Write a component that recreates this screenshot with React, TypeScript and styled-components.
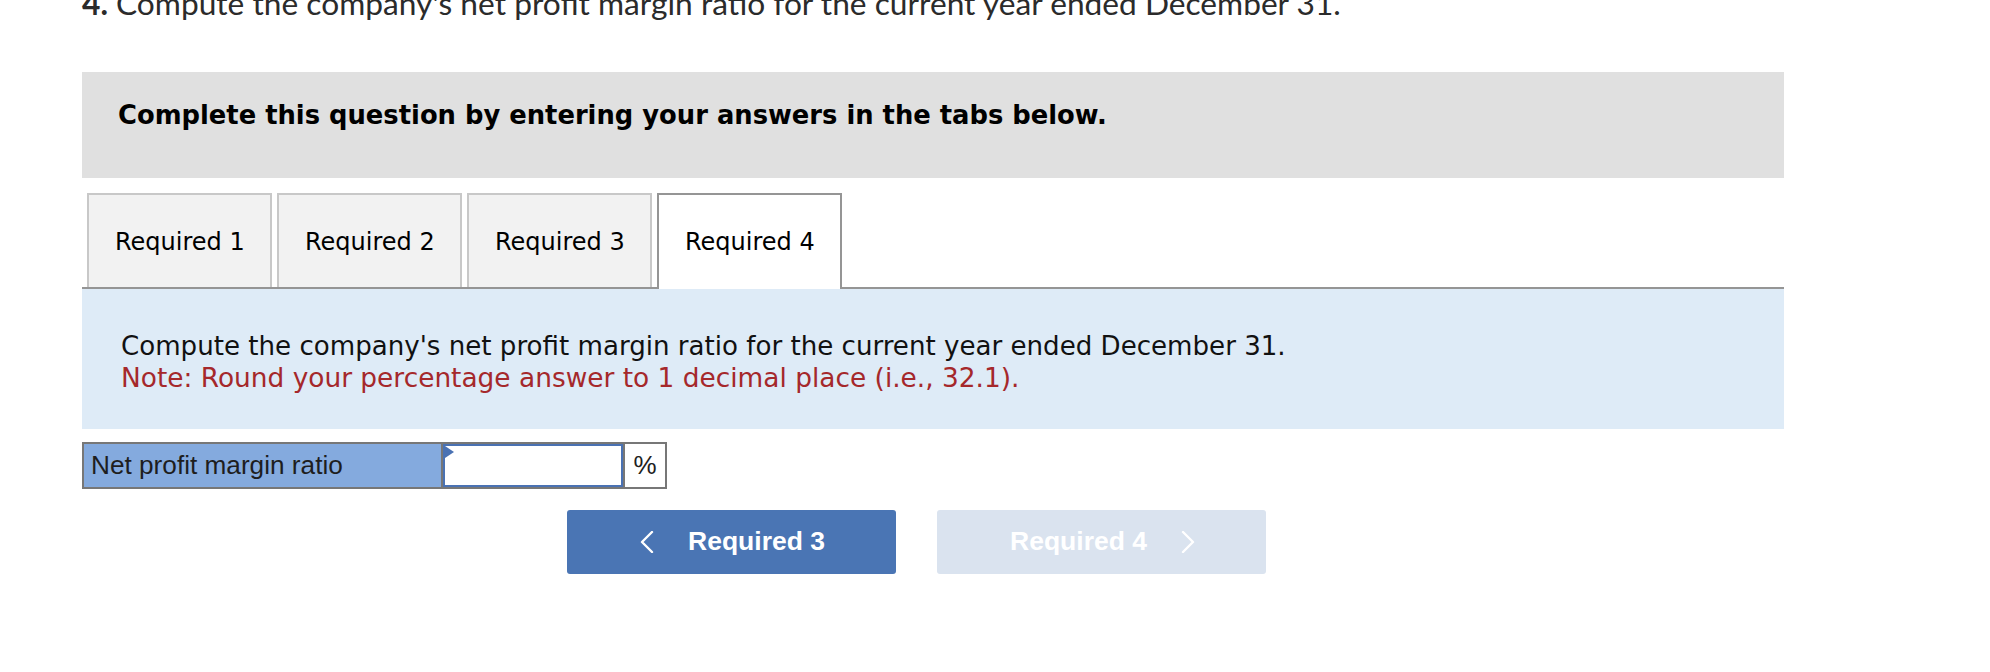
import React from "react";
import styled, { createGlobalStyle } from "styled-components";

const Global = createGlobalStyle`
  html, body { margin: 0; padding: 0; background: #ffffff; }
  body { overflow: hidden; }
`;

const Page = styled.div`
  padding-left: 82px;
  width: 1702px;
`;

const QuestionLine = styled.div`
  margin-top: -12px;
  font-family: Lato, "Open Sans", sans-serif;
  font-size: 31.7px;
  line-height: 31px;
  color: #2b2b2b;
  white-space: nowrap;
  b { font-weight: 700; }
`;

const Instruction = styled.div`
  margin-top: 52.5px;
  background: #e0e0e0;
  padding: 28px 36px 48px;
  font-family: "DejaVu Sans", Verdana, sans-serif;
  font-weight: 700;
  font-size: 25.8px;
  line-height: 30px;
  color: #000;
`;

const TabBar = styled.div`
  margin-top: 15px;
  display: flex;
  align-items: flex-end;
  gap: 5px;
  padding-left: 5px;
  border-bottom: 2px solid #959595;
  height: 94px;
`;

const Tab = styled.div<{ $active?: boolean }>`
  box-sizing: border-box;
  width: 185px;
  height: ${(p) => (p.$active ? "96px" : "94px")};
  margin-bottom: ${(p) => (p.$active ? "-2px" : "0")};
  padding: 2px 0 ${(p) => (p.$active ? "2px" : "0")} 26px;
  display: flex;
  align-items: center;
  background: ${(p) => (p.$active ? "#ffffff" : "#f2f2f2")};
  border: 2px solid ${(p) => (p.$active ? "#959595" : "#c8c8c8")};
  border-bottom: none;
  font-family: "DejaVu Sans", Verdana, sans-serif;
  font-size: 24px;
  color: #000;
`;

const InfoBox = styled.div`
  background: #deebf7;
  padding: 42px 0 36px 39px;
  font-family: "DejaVu Sans", Verdana, sans-serif;
  font-size: 26.1px;
  line-height: 31px;
  color: #111;
`;

const Note = styled.div`
  color: #a5282b;
  font-size: 26.4px;
`;

const AnswerRow = styled.div`
  margin-top: 13px;
  display: inline-flex;
  border: 2px solid #777777;
  height: 47px;
  box-sizing: border-box;
  font-family: "Liberation Sans", Arial, sans-serif;
  font-size: 26.2px;
  color: #1e1e1e;
`;

const LabelCell = styled.div`
  width: 357px;
  box-sizing: border-box;
  background: #84aade;
  padding-left: 7px;
  display: flex;
  align-items: center;
`;

const InputCell = styled.div`
  position: relative;
  width: 182px;
  box-sizing: border-box;
  border-left: 2px solid #777777;
  display: flex;
`;

const AnswerInput = styled.input`
  flex: 1;
  min-width: 0;
  margin: 0;
  box-sizing: border-box;
  border: 2px solid #4a72b3;
  outline: none;
  background: #fff;
  font-family: "Liberation Sans", Arial, sans-serif;
  font-size: 24px;
`;

const Marker = styled.span`
  position: absolute;
  left: 2px;
  top: 2px;
  width: 0;
  height: 0;
  border-top: 6px solid transparent;
  border-bottom: 6px solid transparent;
  border-left: 9px solid #4a72b3;
`;

const UnitCell = styled.div`
  width: 42px;
  box-sizing: border-box;
  border-left: 2px solid #777777;
  background: #fff;
  display: flex;
  align-items: center;
  justify-content: center;
  font-size: 26px;
`;

const NavRow = styled.div`
  margin-top: 21px;
  padding-left: 485px;
  display: flex;
  gap: 41px;
`;

const NavButton = styled.button<{ $disabled?: boolean }>`
  width: 329px;
  height: 64px;
  border: none;
  border-radius: 3px;
  background: ${(p) => (p.$disabled ? "#dae3ef" : "#4a75b4")};
  color: #ffffff;
  display: flex;
  align-items: center;
  justify-content: center;
  gap: 34px;
  padding: 0 0 0 2px;
  font-family: "Liberation Sans", Arial, sans-serif;
  font-weight: 700;
  font-size: 26.5px;
  cursor: ${(p) => (p.$disabled ? "default" : "pointer")};
`;

const Chevron = ({ dir }: { dir: "left" | "right" }) => (
  <svg width="14" height="22" viewBox="0 0 14 22" aria-hidden="true">
    <polyline
      points={dir === "left" ? "12,1 2,11 12,21" : "2,1 12,11 2,21"}
      fill="none"
      stroke="#ffffff"
      strokeWidth="2.4"
      strokeLinecap="round"
      strokeLinejoin="round"
    />
  </svg>
);

const tabs = ["Required 1", "Required 2", "Required 3", "Required 4"];

export default function App() {
  return (
    <>
      <Global />
      <Page>
        <QuestionLine>
          <b>4.</b> Compute the company's net profit margin ratio for the current year ended December 31.
        </QuestionLine>
        <Instruction>Complete this question by entering your answers in the tabs below.</Instruction>
        <TabBar>
          {tabs.map((t, i) => (
            <Tab key={t} $active={i === 3}>
              {t}
            </Tab>
          ))}
        </TabBar>
        <InfoBox>
          <div>Compute the company's net profit margin ratio for the current year ended December 31.</div>
          <Note>Note: Round your percentage answer to 1 decimal place (i.e., 32.1).</Note>
        </InfoBox>
        <AnswerRow>
          <LabelCell>Net profit margin ratio</LabelCell>
          <InputCell>
            <AnswerInput type="text" aria-label="Net profit margin ratio" />
            <Marker />
          </InputCell>
          <UnitCell>%</UnitCell>
        </AnswerRow>
        <NavRow>
          <NavButton>
            <Chevron dir="left" />
            <span>Required 3</span>
          </NavButton>
          <NavButton $disabled>
            <span>Required 4</span>
            <Chevron dir="right" />
          </NavButton>
        </NavRow>
      </Page>
    </>
  );
}
